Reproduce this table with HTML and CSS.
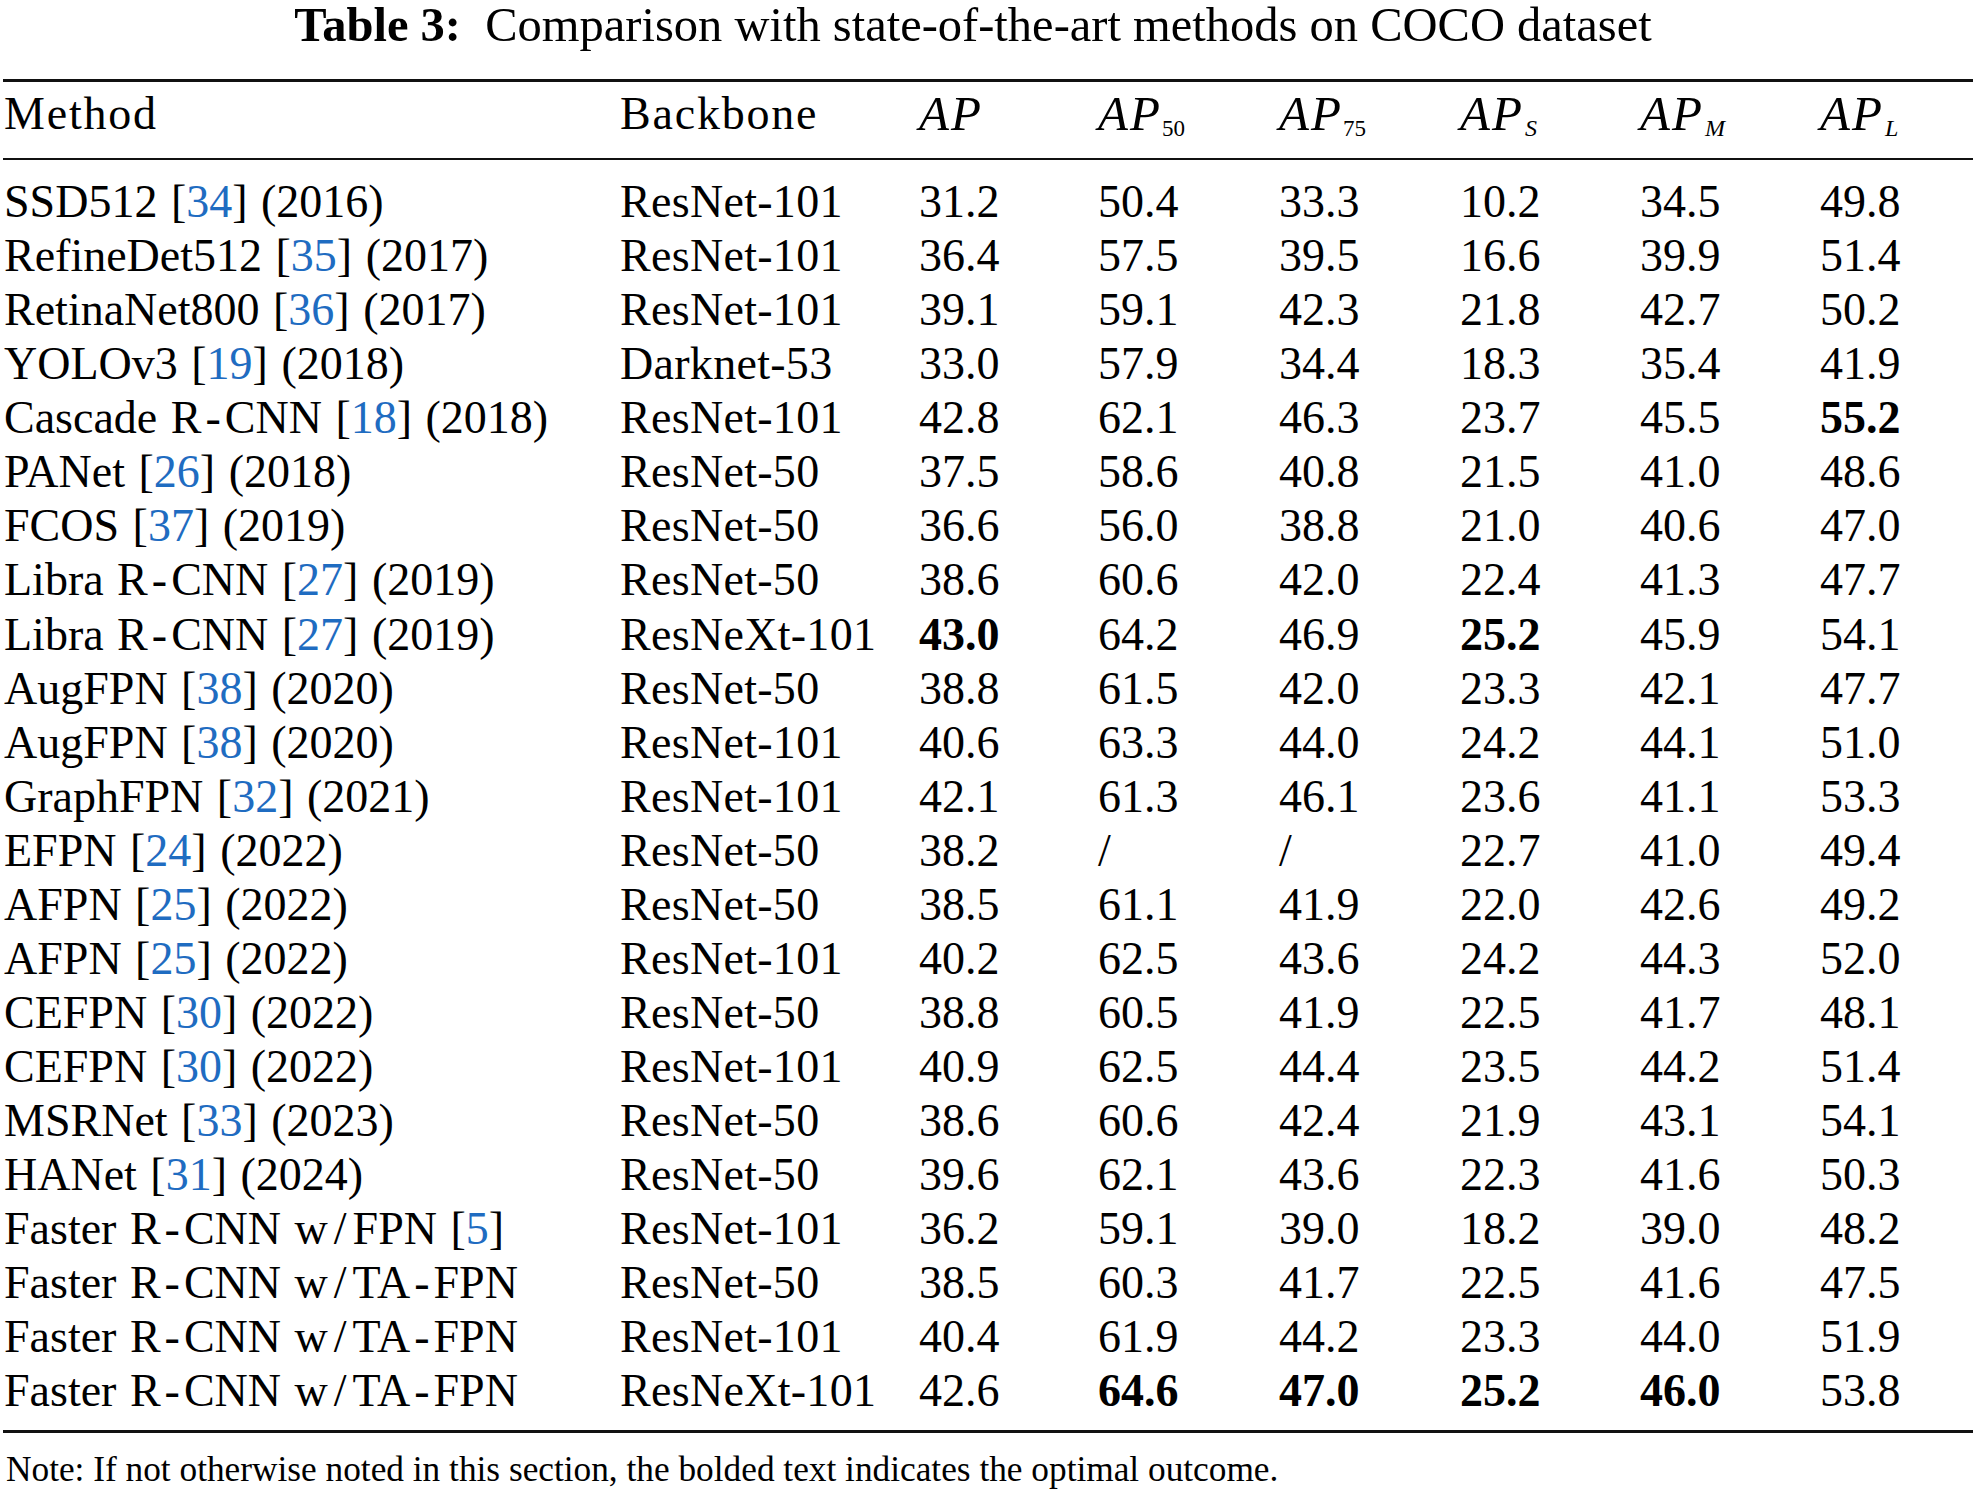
FILE: index.html
```html
<!DOCTYPE html>
<html lang="en">
<head>
<meta charset="utf-8">
<title>Table 3</title>
<link rel="stylesheet" href="styles.css">
</head>
<body>
<div class="page">
  <div class="caption"><b>Table 3:</b>&nbsp; Comparison with state-of-the-art methods on COCO dataset</div>
  <div class="table">
    <div class="row head">
      <div class="c first word">Method</div>
      <div class="c word">Backbone</div>
      <div class="c"><i class="ap">AP</i></div>
      <div class="c"><i class="ap">AP</i><span class="sub">50</span></div>
      <div class="c"><i class="ap">AP</i><span class="sub">75</span></div>
      <div class="c"><i class="ap">AP</i><i class="sub it">S</i></div>
      <div class="c"><i class="ap">AP</i><i class="sub it">M</i></div>
      <div class="c"><i class="ap">AP</i><i class="sub it">L</i></div>
    </div>
    <div class="body">
      <div class="row"><div class="c first">SSD512 [<a class="ref">34</a>] (2016)</div><div class="c bb">ResNet-101</div><div class="c">31.2</div><div class="c">50.4</div><div class="c">33.3</div><div class="c">10.2</div><div class="c">34.5</div><div class="c">49.8</div></div>
      <div class="row"><div class="c first">RefineDet512 [<a class="ref">35</a>] (2017)</div><div class="c bb">ResNet-101</div><div class="c">36.4</div><div class="c">57.5</div><div class="c">39.5</div><div class="c">16.6</div><div class="c">39.9</div><div class="c">51.4</div></div>
      <div class="row"><div class="c first">RetinaNet800 [<a class="ref">36</a>] (2017)</div><div class="c bb">ResNet-101</div><div class="c">39.1</div><div class="c">59.1</div><div class="c">42.3</div><div class="c">21.8</div><div class="c">42.7</div><div class="c">50.2</div></div>
      <div class="row"><div class="c first">YOLOv3 [<a class="ref">19</a>] (2018)</div><div class="c bb">Darknet-53</div><div class="c">33.0</div><div class="c">57.9</div><div class="c">34.4</div><div class="c">18.3</div><div class="c">35.4</div><div class="c">41.9</div></div>
      <div class="row"><div class="c first">Cascade R<span class="hy">-</span>CNN [<a class="ref">18</a>] (2018)</div><div class="c bb">ResNet-101</div><div class="c">42.8</div><div class="c">62.1</div><div class="c">46.3</div><div class="c">23.7</div><div class="c">45.5</div><div class="c b">55.2</div></div>
      <div class="row"><div class="c first">PANet [<a class="ref">26</a>] (2018)</div><div class="c bb">ResNet-50</div><div class="c">37.5</div><div class="c">58.6</div><div class="c">40.8</div><div class="c">21.5</div><div class="c">41.0</div><div class="c">48.6</div></div>
      <div class="row"><div class="c first">FCOS [<a class="ref">37</a>] (2019)</div><div class="c bb">ResNet-50</div><div class="c">36.6</div><div class="c">56.0</div><div class="c">38.8</div><div class="c">21.0</div><div class="c">40.6</div><div class="c">47.0</div></div>
      <div class="row"><div class="c first">Libra R<span class="hy">-</span>CNN [<a class="ref">27</a>] (2019)</div><div class="c bb">ResNet-50</div><div class="c">38.6</div><div class="c">60.6</div><div class="c">42.0</div><div class="c">22.4</div><div class="c">41.3</div><div class="c">47.7</div></div>
      <div class="row"><div class="c first">Libra R<span class="hy">-</span>CNN [<a class="ref">27</a>] (2019)</div><div class="c bb">ResNeXt-101</div><div class="c b">43.0</div><div class="c">64.2</div><div class="c">46.9</div><div class="c b">25.2</div><div class="c">45.9</div><div class="c">54.1</div></div>
      <div class="row"><div class="c first">AugFPN [<a class="ref">38</a>] (2020)</div><div class="c bb">ResNet-50</div><div class="c">38.8</div><div class="c">61.5</div><div class="c">42.0</div><div class="c">23.3</div><div class="c">42.1</div><div class="c">47.7</div></div>
      <div class="row"><div class="c first">AugFPN [<a class="ref">38</a>] (2020)</div><div class="c bb">ResNet-101</div><div class="c">40.6</div><div class="c">63.3</div><div class="c">44.0</div><div class="c">24.2</div><div class="c">44.1</div><div class="c">51.0</div></div>
      <div class="row"><div class="c first">GraphFPN [<a class="ref">32</a>] (2021)</div><div class="c bb">ResNet-101</div><div class="c">42.1</div><div class="c">61.3</div><div class="c">46.1</div><div class="c">23.6</div><div class="c">41.1</div><div class="c">53.3</div></div>
      <div class="row"><div class="c first">EFPN [<a class="ref">24</a>] (2022)</div><div class="c bb">ResNet-50</div><div class="c">38.2</div><div class="c">/</div><div class="c">/</div><div class="c">22.7</div><div class="c">41.0</div><div class="c">49.4</div></div>
      <div class="row"><div class="c first">AFPN [<a class="ref">25</a>] (2022)</div><div class="c bb">ResNet-50</div><div class="c">38.5</div><div class="c">61.1</div><div class="c">41.9</div><div class="c">22.0</div><div class="c">42.6</div><div class="c">49.2</div></div>
      <div class="row"><div class="c first">AFPN [<a class="ref">25</a>] (2022)</div><div class="c bb">ResNet-101</div><div class="c">40.2</div><div class="c">62.5</div><div class="c">43.6</div><div class="c">24.2</div><div class="c">44.3</div><div class="c">52.0</div></div>
      <div class="row"><div class="c first">CEFPN [<a class="ref">30</a>] (2022)</div><div class="c bb">ResNet-50</div><div class="c">38.8</div><div class="c">60.5</div><div class="c">41.9</div><div class="c">22.5</div><div class="c">41.7</div><div class="c">48.1</div></div>
      <div class="row"><div class="c first">CEFPN [<a class="ref">30</a>] (2022)</div><div class="c bb">ResNet-101</div><div class="c">40.9</div><div class="c">62.5</div><div class="c">44.4</div><div class="c">23.5</div><div class="c">44.2</div><div class="c">51.4</div></div>
      <div class="row"><div class="c first">MSRNet [<a class="ref">33</a>] (2023)</div><div class="c bb">ResNet-50</div><div class="c">38.6</div><div class="c">60.6</div><div class="c">42.4</div><div class="c">21.9</div><div class="c">43.1</div><div class="c">54.1</div></div>
      <div class="row"><div class="c first">HANet [<a class="ref">31</a>] (2024)</div><div class="c bb">ResNet-50</div><div class="c">39.6</div><div class="c">62.1</div><div class="c">43.6</div><div class="c">22.3</div><div class="c">41.6</div><div class="c">50.3</div></div>
      <div class="row"><div class="c first">Faster R<span class="hy">-</span>CNN w<span class="sl">/</span>FPN [<a class="ref">5</a>]</div><div class="c bb">ResNet-101</div><div class="c">36.2</div><div class="c">59.1</div><div class="c">39.0</div><div class="c">18.2</div><div class="c">39.0</div><div class="c">48.2</div></div>
      <div class="row"><div class="c first">Faster R<span class="hy">-</span>CNN w<span class="sl">/</span>TA<span class="hy">-</span>FPN</div><div class="c bb">ResNet-50</div><div class="c">38.5</div><div class="c">60.3</div><div class="c">41.7</div><div class="c">22.5</div><div class="c">41.6</div><div class="c">47.5</div></div>
      <div class="row"><div class="c first">Faster R<span class="hy">-</span>CNN w<span class="sl">/</span>TA<span class="hy">-</span>FPN</div><div class="c bb">ResNet-101</div><div class="c">40.4</div><div class="c">61.9</div><div class="c">44.2</div><div class="c">23.3</div><div class="c">44.0</div><div class="c">51.9</div></div>
      <div class="row"><div class="c first">Faster R<span class="hy">-</span>CNN w<span class="sl">/</span>TA<span class="hy">-</span>FPN</div><div class="c bb">ResNeXt-101</div><div class="c">42.6</div><div class="c b">64.6</div><div class="c b">47.0</div><div class="c b">25.2</div><div class="c b">46.0</div><div class="c">53.8</div></div>
    </div>
  </div>
  <div class="note">Note: If not otherwise noted in this section, the bolded text indicates the optimal outcome.</div>
</div>
</body>
</html>
```

FILE: styles.css
```css
html, body {
  margin: 0;
  padding: 0;
  background: #ffffff;
}

body {
  font-family: "Liberation Serif", "Times New Roman", serif;
  color: #000000;
}

.page {
  width: 1970px;
  margin-left: 3px;
}

.caption {
  font-size: 48.5px;
  line-height: 50px;
  text-align: center;
  padding-right: 30px;
  margin-bottom: 29px;
  white-space: nowrap;
}

.caption b {
  font-weight: bold;
}

.table {
  border-top: 3px solid #111111;
  border-bottom: 3px solid #111111;
}

.row {
  display: grid;
  grid-template-columns: 617px 299px 179px 181px 181px 180px 180px 1fr;
  font-size: 46px;
  line-height: 54.06px;
  white-space: nowrap;
}

.head {
  height: 78px;
  padding-top: 5px;
  box-sizing: border-box;
  border-bottom: 2px solid #111111;
}

.head .word {
  letter-spacing: 1.8px;
}

.body {
  padding-top: 15px;
  padding-bottom: 12px;
}

.c.first {
  padding-left: 1px;
}

.body .c.first {
  word-spacing: 2px;
}

.bb {
  letter-spacing: 0.3px;
}

.hy {
  margin: 0 4px;
}

.sl {
  margin: 0 6px;
}

.b {
  font-weight: bold;
}

.ap {
  font-style: italic;
  font-size: 49px;
  letter-spacing: 2px;
}

.sub {
  font-size: 23px;
  line-height: 0;
  vertical-align: -6px;
  font-style: normal;
}

.sub.it {
  font-style: italic;
  font-size: 24px;
  margin-left: 1px;
}

.ref {
  color: #1f6cc1;
  text-decoration: none;
}

.note {
  font-size: 35.3px;
  line-height: 40px;
  margin-top: 17px;
  padding-left: 3px;
  white-space: nowrap;
}
```
